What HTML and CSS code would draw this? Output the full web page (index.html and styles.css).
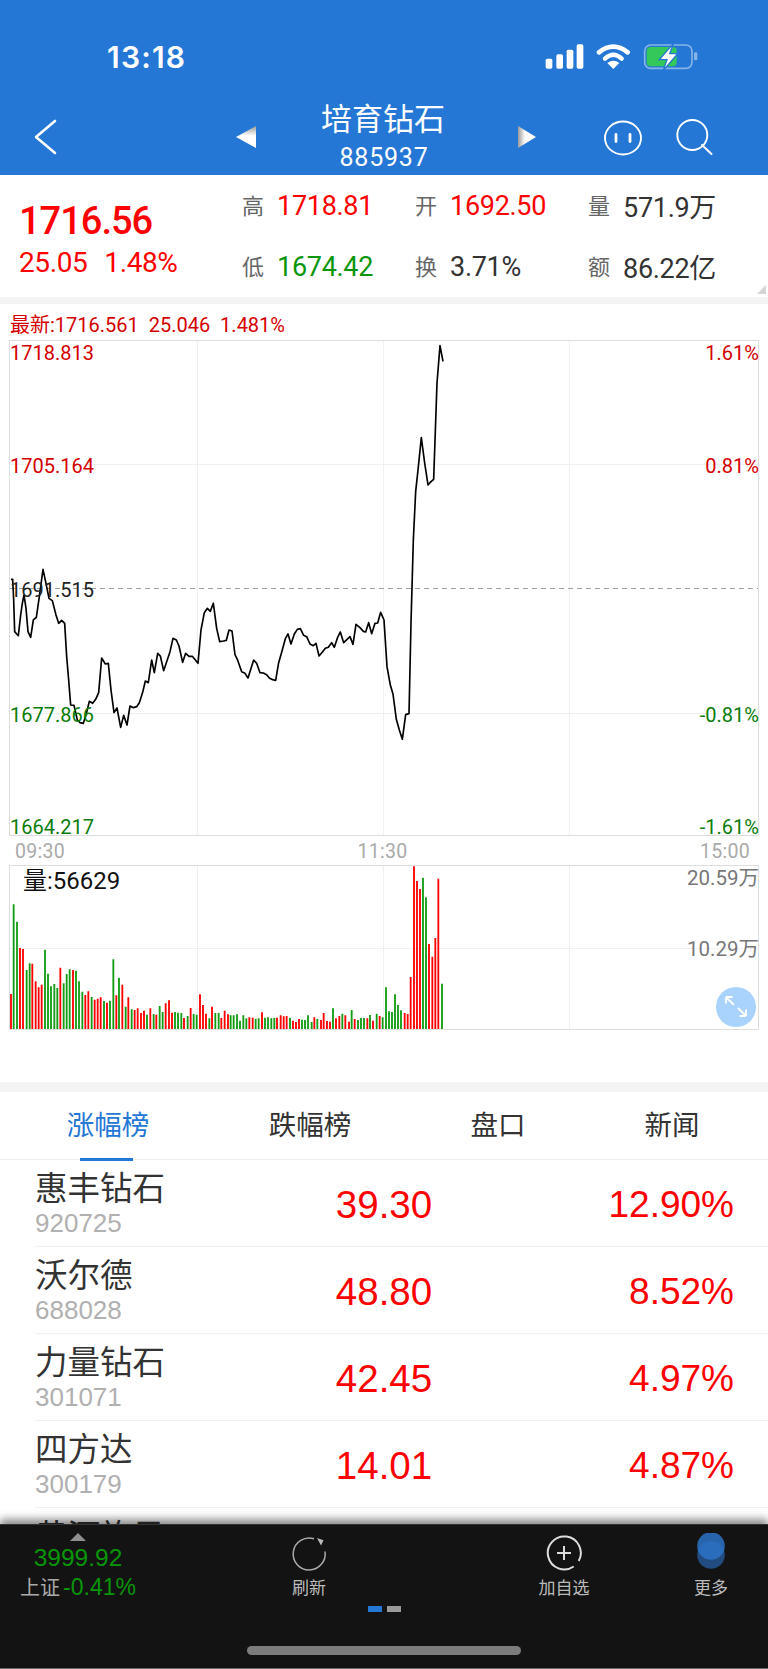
FILE: index.html
```html
<!DOCTYPE html>
<html lang="zh-CN">
  <head>
    <meta charset="UTF-8" />
    <meta name="viewport" content="width=device-width, initial-scale=1.0" />
    <title>培育钻石</title>
    <link rel="stylesheet" href="styles.css">
  </head>
  <body>
    <div class="app">
      <header class="top-bar">
        <div class="status-bar">
          <span class="clock">13:18</span>
          <svg class="status-icons" viewBox="40 38 465 84" width="155" height="28">
            <rect x="45" y="85" width="20" height="30" rx="5" fill="#fff" />
            <rect x="77" y="72" width="20" height="43" rx="5" fill="#fff" />
            <rect x="108" y="58" width="20" height="57" rx="5" fill="#fff" />
            <rect x="138" y="42" width="20" height="73" rx="5" fill="#fff" />
            <path d="M205 66Q248 32 291 66" fill="none" stroke="#fff" stroke-width="14" stroke-linecap="round" />
            <path d="M223 85Q248 62 273 85" fill="none" stroke="#fff" stroke-width="13" stroke-linecap="round" />
            <path d="M248 116L230 98Q248 84 266 98Z" fill="#fff" />
            <rect x="342" y="44" width="142" height="70" rx="18" fill="none" stroke="#fff" stroke-opacity=".45" stroke-width="5" />
            <rect x="490" y="66" width="10" height="24" rx="4" fill="#fff" fill-opacity=".45" />
            <rect x="348" y="50" width="90" height="58" rx="12" fill="#34c759" />
            <polygon points="428,40 386,88 409,88 398,120 441,70 417,70" fill="#fff" stroke="#2577d5" stroke-width="4" />
          </svg>
        </div>
        <nav class="nav-bar">
          <div class="nav-left">
            <svg width="24" height="36" viewBox="0 0 24 36">
              <path d="M21 2L2 18L21 34" fill="none" stroke="#fff" stroke-width="2.6" stroke-linecap="round" stroke-linejoin="round" />
            </svg>
          </div>
          <div class="nav-center">
            <svg class="nav-arrow" width="20" height="24" viewBox="0 0 20 24">
              <defs>
                <linearGradient id="arrowLeft" x1="0" y1="0" x2="0" y2="1">
                  <stop offset="0" stop-color="#9a9a9a" />
                  <stop offset=".45" stop-color="#fff" />
                </linearGradient>
              </defs>
              <polygon points="0,12 20,1 20,23" fill="url(#arrowLeft)" />
            </svg>
            <div class="nav-title">
              <div class="title-name">培育钻石</div>
              <div class="title-code">885937</div>
            </div>
            <svg class="nav-arrow" width="18" height="24" viewBox="0 0 18 24">
              <defs>
                <linearGradient id="arrowRight" x1="0" y1="0" x2="1" y2="0">
                  <stop offset="0" stop-color="#9a9a9a" />
                  <stop offset=".4" stop-color="#fff" />
                </linearGradient>
              </defs>
              <polygon points="18,12 0,1 0,23" fill="url(#arrowRight)" />
            </svg>
          </div>
          <div class="nav-right">
            <svg class="nav-face" width="40" height="36" viewBox="0 0 40 36">
              <ellipse cx="20" cy="18" rx="18" ry="16.5" fill="none" stroke="#fff" stroke-width="1.9" />
              <path d="M13 14.5V21.5M27 14.5V21.5" stroke="#fff" stroke-width="2.8" stroke-linecap="round" />
            </svg>
            <svg width="40" height="40" viewBox="0 0 40 40">
              <circle cx="18.3" cy="18" r="15" fill="none" stroke="#fff" stroke-width="1.9" />
              <path d="M28 28L37.5 37" stroke="#fff" stroke-width="2" stroke-linecap="round" />
            </svg>
          </div>
        </nav>
      </header>

      <section class="quote">
        <div class="quote-main">
          <div class="quote-price">1716.56</div>
          <div class="quote-change"><span>25.05</span><span>1.48%</span></div>
        </div>
        <div class="quote-stats">
          <div class="stat"><span class="stat-label">高</span><span class="stat-value up">1718.81</span></div>
          <div class="stat"><span class="stat-label">开</span><span class="stat-value up">1692.50</span></div>
          <div class="stat"><span class="stat-label">量</span><span class="stat-value">571.9万</span></div>
          <div class="stat"><span class="stat-label">低</span><span class="stat-value down">1674.42</span></div>
          <div class="stat"><span class="stat-label">换</span><span class="stat-value">3.71%</span></div>
          <div class="stat"><span class="stat-label">额</span><span class="stat-value">86.22亿</span></div>
        </div>
        <span class="quote-corner"></span>
      </section>

      <div class="latest">最新:1716.561&nbsp; 25.046&nbsp; 1.481%</div>

      <svg class="price-chart" width="768" height="496">
        <path class="grid-line" d="M197.5 0V495M383.5 0V495M569.5 0V495M10 124.5H758M10 373.5H758" />
        <rect class="chart-box" x="9.5" y="0.5" width="749" height="495" />
        <line class="pre-close" x1="10" y1="248.5" x2="758" y2="248.5" />
        <polyline class="price-line" transform="scale(.33333) translate(0 600)" points="33,118 38,118 41,180 44,275 50,282 55,287 62,225 67,190 72,165 78,205 84,275 92,292 100,240 109,232 118,170 129,88 138,130 147,175 157,182 168,225 176,250 185,241 194,250 200,350 206,420 212,495 222,496 232,540 240,548 250,550 258,525 268,484 278,490 287,478 296,458 305,354 316,372 325,370 333,450 342,518 351,504 362,562 371,526 381,555 390,498 400,503 410,500 418,488 428,457 436,423 445,428 455,360 463,398 473,340 481,348 491,392 510,335 519,295 529,300 537,318 548,367 557,340 567,349 577,349 594,370 603,270 613,218 622,205 631,214 640,190 650,265 659,305 670,303 679,301 687,270 696,273 705,344 712,358 725,395 735,400 744,414 761,360 770,370 780,398 790,399 800,404 808,414 818,419 827,421 836,368 845,337 856,296 864,282 873,312 883,282 892,268 901,266 911,286 920,290 930,312 940,317 948,310 957,348 968,335 976,325 985,322 995,308 1003,322 1013,292 1021,276 1031,308 1050,290 1059,313 1068,253 1080,263 1090,274 1097,276 1106,248 1115,281 1125,250 1133,249 1142,217 1152,240 1161,380 1171,435 1179,462 1189,538 1198,570 1207,598 1217,524 1227,521 1233,250 1240,0 1247,-145 1254,-210 1264,-307 1274,-231 1284,-165 1293,-175 1301,-182 1311,-471 1320,-583 1329,-536" />
        <text class="axis-label up-label" x="10" y="20">1718.813</text>
        <text class="axis-label up-label" x="10" y="133">1705.164</text>
        <text class="axis-label flat-label" x="10" y="257">1691.515</text>
        <text class="axis-label down-label" x="10" y="382">1677.866</text>
        <text class="axis-label down-label" x="10" y="494">1664.217</text>
        <text class="axis-label up-label end" x="759" y="20">1.61%</text>
        <text class="axis-label up-label end" x="759" y="133">0.81%</text>
        <text class="axis-label down-label end" x="759" y="382">-0.81%</text>
        <text class="axis-label down-label end" x="759" y="494">-1.61%</text>
      </svg>

      <div class="time-axis">
        <span>09:30</span>
        <span>11:30</span>
        <span>15:00</span>
      </div>

      <svg class="volume-chart" width="768" height="166">
        <path class="grid-line" d="M197.5 0V164M383.5 0V164M569.5 0V164M10 83.5H758" />
        <rect class="chart-box" x="9.5" y="0.5" width="749" height="164" />
        <g transform="scale(.33333) translate(0 -135)">
          <path class="bar-red" d="M33 627V522M60 627V384M69 627V387M97 627V431M107 627V484M116 627V502M125 627V494M181 627V443M219 627V450M256 627V525M265 627V514M284 627V539M293 627V536M302 627V532M321 627V548M349 627V526M367 627V494M385 627V532M404 627V570M413 627V565M423 627V579M432 627V572M451 627V565M469 627V584M497 627V550M507 627V541M516 627V578M552 627V594M572 627V564M600 627V523M609 627V555M618 627V581M636 627V560M664 627V594M674 627V572M684 627V583M748 627V592M758 627V593M786 627V577M831 627V593M842 627V586M851 627V589M860 627V588M879 627V602M888 627V606M897 627V597M943 627V592M963 627V600M971 627V579M981 627V603M990 627V605M1008 627V595M1018 627V588M1036 627V586M1047 627V605M1064 627V597M1102 627V595M1119 627V602M1139 627V588M1214 627V579M1223 627V582M1232 627V471M1242 627V139M1251 627V183M1260 627V207M1287 627V372M1297 627V410M1306 627V354M1315 627V176" />
          <path class="bar-green" d="M41 627V253M51 627V305M80 627V450M89 627V430M135 627V389M144 627V461M153 627V499M163 627V492M172 627V504M191 627V490M200 627V462M209 627V448M228 627V452M237 627V484M247 627V515M275 627V531M312 627V543M330 627V542M340 627V418M357 627V473M377 627V560M395 627V568M441 627V584M461 627V582M479 627V558M488 627V576M525 627V576M534 627V578M544 627V579M563 627V588M581 627V582M590 627V584M628 627V595M646 627V579M656 627V579M692 627V586M701 627V586M711 627V583M720 627V602M730 627V586M739 627V595M767 627V596M776 627V595M795 627V593M804 627V592M814 627V595M823 627V594M870 627V593M906 627V599M915 627V600M924 627V586M935 627V606M952 627V597M999 627V565M1027 627V581M1055 627V570M1074 627V600M1083 627V594M1092 627V594M1110 627V585M1130 627V581M1148 627V592M1158 627V502M1167 627V574M1176 627V576M1185 627V523M1194 627V555M1203 627V571M1269 627V173M1278 627V232M1326 627V491" />
        </g>
        <text class="volume-label" x="23" y="24">量:56629</text>
        <text class="volume-scale end" x="759" y="20">20.59万</text>
        <text class="volume-scale end" x="759" y="91">10.29万</text>
        <circle cx="736" cy="142" r="20" fill="#a9d3fd" />
        <path d="M726 132L734 140M726 132V138.5M726 132H732.5M746 151L738 143M746 151V144.5M746 151H739.5" fill="none" stroke="#fff" stroke-width="1.8" />
      </svg>

      <div class="band"></div>

      <div class="tabs">
        <div class="tab active">涨幅榜</div>
        <div class="tab">跌幅榜</div>
        <div class="tab">盘口</div>
        <div class="tab">新闻</div>
      </div>

      <div class="stock-list">
        <div class="stock-row">
          <div class="stock-id"><div class="stock-name">惠丰钻石</div><div class="stock-code">920725</div></div>
          <div class="stock-price">39.30</div>
          <div class="stock-pct">12.90%</div>
        </div>
        <div class="stock-row">
          <div class="stock-id"><div class="stock-name">沃尔德</div><div class="stock-code">688028</div></div>
          <div class="stock-price">48.80</div>
          <div class="stock-pct">8.52%</div>
        </div>
        <div class="stock-row">
          <div class="stock-id"><div class="stock-name">力量钻石</div><div class="stock-code">301071</div></div>
          <div class="stock-price">42.45</div>
          <div class="stock-pct">4.97%</div>
        </div>
        <div class="stock-row">
          <div class="stock-id"><div class="stock-name">四方达</div><div class="stock-code">300179</div></div>
          <div class="stock-price">14.01</div>
          <div class="stock-pct">4.87%</div>
        </div>
        <div class="stock-row">
          <div class="stock-id"><div class="stock-name">黄河旋风</div></div>
        </div>
      </div>

      <footer class="dock">
        <div class="dock-row">
          <div class="dock-index">
            <span class="index-arrow"></span>
            <div class="index-value">3999.92</div>
            <div class="index-line"><span class="index-name">上证</span><span class="index-pct">-0.41%</span></div>
          </div>
          <div class="dock-item">
            <svg width="40" height="40" viewBox="0 0 40 40">
              <path d="M25 5.7A16 16 0 1 0 36 18.5" fill="none" stroke="#aaa" stroke-width="1.5" />
              <polygon points="28,5 34.5,7.3 32,12.5" fill="#bbb" />
            </svg>
            <div class="dock-text">刷新</div>
          </div>
          <div class="dock-item">
            <svg width="40" height="40" viewBox="0 0 40 40">
              <path d="M34.7 28A16.5 16.5 0 1 0 29.7 33.5" fill="none" stroke="#ddd" stroke-width="2" />
              <path d="M20 13V27M13 20H27" stroke="#ddd" stroke-width="2" />
            </svg>
            <div class="dock-text">加自选</div>
          </div>
          <div class="dock-item">
            <svg width="40" height="40" viewBox="0 0 40 40">
              <circle cx="20" cy="22" r="13.8" fill="#2d73c8" fill-opacity=".6" />
              <circle cx="20" cy="13" r="13.8" fill="#2d73c8" fill-opacity=".85" />
            </svg>
            <div class="dock-text">更多</div>
          </div>
        </div>
        <div class="pager">
          <span class="pager-dot current"></span>
          <span class="pager-dot"></span>
        </div>
        <div class="home-bar"></div>
      </footer>
    </div>
  </body>
</html>
```

FILE: styles.css
```css
* {
  margin: 0;
  padding: 0;
  box-sizing: border-box;
}
body {
  background: #fff;
  font-family: Roboto, "Noto Sans CJK SC", sans-serif;
  color: #333;
}
svg {
  display: block;
}

.app {
  width: 768px;
  height: 1669px;
  display: flex;
  flex-direction: column;
  overflow: hidden;
}

/* blue header */
.top-bar {
  height: 175px;
  background: #2577d5;
  color: #fff;
  flex-shrink: 0;
}
.status-bar {
  height: 98px;
  padding: 37px 69px 0 107px;
  display: flex;
  justify-content: space-between;
  align-items: flex-start;
}
.clock {
  font-family: Inter, sans-serif;
  font-weight: 600;
  font-size: 30px;
  line-height: 40px;
  letter-spacing: 1.2px;
}
.status-icons {
  margin-top: 6px;
}
.nav-bar {
  height: 77px;
  display: grid;
  grid-template-columns: 236px 300px 1fr;
  align-items: center;
}
.nav-left {
  padding-left: 34px;
}
.nav-center {
  display: flex;
  align-items: center;
}
.nav-title {
  width: 254px;
  margin-right: 8px;
  padding-top: 2px;
  text-align: center;
  align-self: flex-start;
}
.title-name {
  font-size: 31px;
  line-height: 36px;
}
.title-code {
  font-size: 25px;
  line-height: 30px;
  margin-top: 5px;
  letter-spacing: 0.8px;
  padding-left: 2px;
}
.nav-right {
  display: flex;
  justify-content: flex-end;
  align-items: center;
  gap: 31px;
  padding-right: 54px;
}
.nav-face {
  margin-top: 2px;
}

/* quote panel */
.quote {
  height: 122px;
  position: relative;
  display: flex;
  flex-shrink: 0;
}
.quote-main {
  width: 242px;
  padding: 24px 0 0 19px;
  color: #f00;
}
.quote-price {
  font-size: 38px;
  font-weight: 500;
  line-height: 44px;
  letter-spacing: -1px;
}
.quote-change {
  margin-top: 2px;
  font-size: 28px;
  line-height: 36px;
  letter-spacing: -0.4px;
  display: flex;
  gap: 17px;
}
.quote-stats {
  display: grid;
  grid-template-columns: repeat(3, 173px);
  grid-auto-rows: 31px;
  row-gap: 30px;
  padding-top: 15px;
}
.stat {
  display: flex;
  align-items: center;
  gap: 13px;
}
.stat-label {
  font-size: 22px;
  color: #666;
  margin-top: -3px;
}
.stat-value {
  font-size: 27px;
  letter-spacing: -0.3px;
  color: #333;
}
.stat-value.up {
  color: #f00;
}
.stat-value.down {
  color: #0a960a;
}
.quote-corner {
  position: absolute;
  right: 2px;
  bottom: 3px;
  width: 0;
  height: 0;
  border-left: 9px solid transparent;
  border-bottom: 9px solid #d5d5d5;
}

/* intraday chart */
.latest {
  height: 43px;
  border-top: 7px solid #f4f4f4;
  padding: 3px 0 0 10px;
  font-size: 20px;
  line-height: 36px;
  color: #d40000;
  flex-shrink: 0;
}
.price-chart,
.volume-chart {
  flex-shrink: 0;
  overflow: visible;
}
.grid-line {
  stroke: #f0f0f0;
  stroke-width: 1;
  fill: none;
}
.chart-box {
  fill: none;
  stroke: #dedede;
  stroke-width: 1;
}
.pre-close {
  stroke: #a0a0a0;
  stroke-width: 1;
  stroke-dasharray: 5 4;
}
.price-line {
  fill: none;
  stroke: #000;
  stroke-width: 5;
  stroke-linejoin: round;
}
.axis-label {
  font-size: 20px;
}
.end {
  text-anchor: end;
}
.up-label {
  fill: #d40000;
}
.flat-label {
  fill: #222;
}
.down-label {
  fill: #0a7d0a;
}
.time-axis {
  height: 29px;
  padding: 2px 18px 0 15px;
  display: flex;
  justify-content: space-between;
  align-items: center;
  font-size: 19.5px;
  letter-spacing: 0.3px;
  color: #aaa;
  flex-shrink: 0;
}
.bar-red,
.bar-green {
  fill: none;
  stroke-width: 5.5;
}
.bar-red {
  stroke: #f00;
}
.bar-green {
  stroke: #129c12;
}
.volume-label {
  font-size: 24px;
  fill: #111;
}
.volume-scale {
  font-size: 20.5px;
  fill: #777;
}

.band {
  height: 10px;
  margin-top: 51px;
  background: #f4f4f4;
  flex-shrink: 0;
}

/* tabs */
.tabs {
  height: 68px;
  display: grid;
  grid-template-columns: 216px 188px 188px 160px;
  border-bottom: 1px solid #eee;
  flex-shrink: 0;
}
.tab {
  position: relative;
  font-size: 27.5px;
  line-height: 68px;
  text-align: center;
  color: #333;
}
.tab.active {
  color: #2577d5;
}
.tab.active::after {
  content: "";
  position: absolute;
  left: 80px;
  bottom: -1px;
  width: 53px;
  height: 3px;
  background: #2577d5;
}

/* ranking list */
.stock-list {
  flex: 1;
  min-height: 0;
  overflow: hidden;
  font-family: "Liberation Sans", "Noto Sans CJK SC", sans-serif;
}
.stock-row {
  height: 87px;
  margin-left: 35px;
  padding: 0 34px 0 0;
  display: grid;
  grid-template-columns: 250px 198px 1fr;
  align-items: center;
  border-bottom: 1px solid #f0f0f0;
}
.stock-id {
  align-self: start;
  padding-top: 6px;
}
.stock-name {
  font-family: "Noto Sans CJK SC", sans-serif;
  font-size: 32.5px;
  line-height: 40px;
  color: #333;
}
.stock-code {
  font-size: 26px;
  line-height: 30px;
  padding-top: 2px;
  color: #b0b0b0;
}
.stock-price,
.stock-pct {
  color: #f00;
  padding-top: 3px;
}
.stock-price {
  font-size: 38.5px;
  text-align: center;
}
.stock-pct {
  font-size: 37px;
  text-align: right;
}

/* bottom dock */
.dock {
  height: 145px;
  background: #131313;
  border-top: 1px solid #333;
  border-bottom: 1px solid #666;
  box-shadow: 0 -5px 8px rgba(0, 0, 0, 0.45);
  position: relative;
  flex-shrink: 0;
  display: flex;
  flex-direction: column;
  align-items: center;
}
.dock-row {
  width: 100%;
  display: grid;
  grid-template-columns: 156px 306px 204px 90px;
  height: 77px;
}
.dock-index {
  padding-top: 8px;
  display: flex;
  flex-direction: column;
  align-items: center;
  font-family: "Liberation Sans", "Noto Sans CJK SC", sans-serif;
}
.index-arrow {
  width: 0;
  height: 0;
  border-left: 8px solid transparent;
  border-right: 8px solid transparent;
  border-bottom: 8px solid #8f8f8f;
}
.index-value {
  margin-top: 2px;
  font-size: 24.5px;
  line-height: 30px;
  color: #0a960a;
}
.index-line {
  font-size: 23px;
  line-height: 28px;
  white-space: nowrap;
}
.index-name {
  font-family: "Noto Sans CJK SC", sans-serif;
  font-size: 20px;
  margin-right: 3px;
  color: #aaa;
}
.index-pct {
  color: #0a960a;
}
.dock-item {
  padding-top: 8px;
  display: flex;
  flex-direction: column;
  align-items: center;
}
.dock-text {
  margin-top: 2px;
  font-size: 17px;
  line-height: 26px;
  color: #bbb;
}
.pager {
  display: flex;
  gap: 5px;
  margin-top: 4px;
}
.pager-dot {
  width: 14px;
  height: 6px;
  background: #9a9a9a;
}
.pager-dot.current {
  background: #2577d5;
}
.home-bar {
  width: 274px;
  height: 9px;
  margin-top: 34px;
  border-radius: 5px;
  background: #7c7c7c;
}
```
